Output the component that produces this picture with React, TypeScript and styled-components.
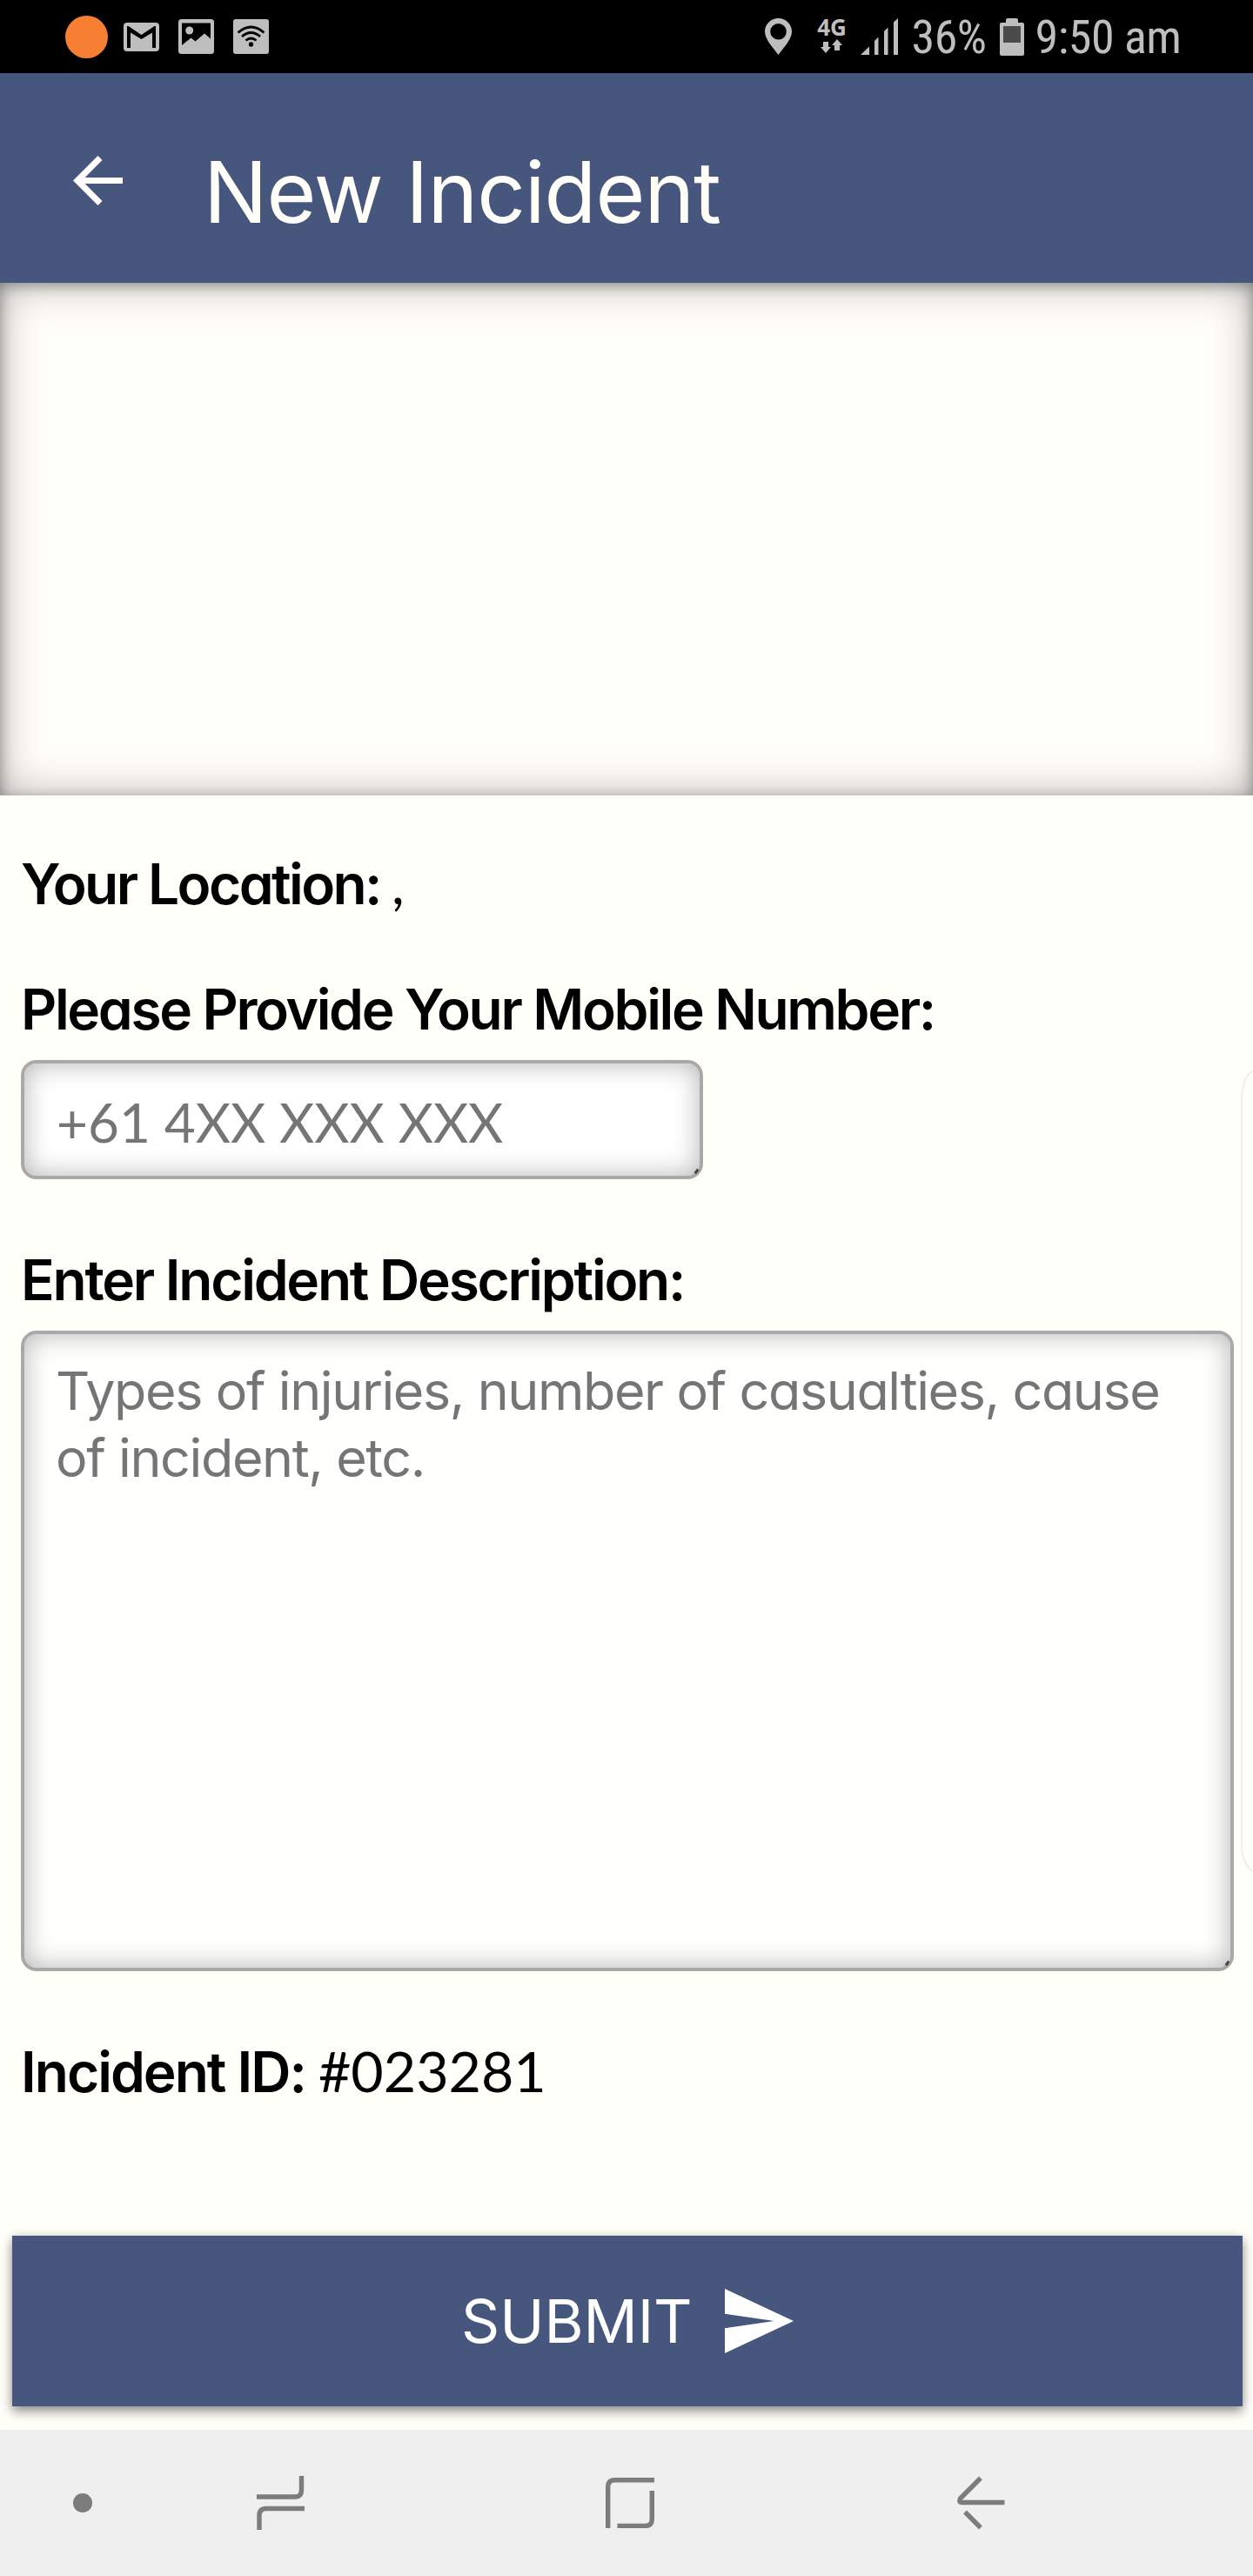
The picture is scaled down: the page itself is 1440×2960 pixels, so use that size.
import React from 'react';
import styled, { createGlobalStyle } from 'styled-components';

const GlobalStyle = createGlobalStyle`
  * { box-sizing: border-box; }
  body { margin: 0; background: #fffef9; }
`;

const uiFont = `Inter, 'Liberation Sans', sans-serif`;
const digitFont = `Lato, 'Liberation Sans', sans-serif`;
const navy = '#47567d';
const statusGrey = '#bebebe';
const navGrey = '#7c7c7c';

const Screen = styled.div`
  position: relative;
  display: flex;
  flex-direction: column;
  width: 1440px;
  height: 2960px;
  overflow: hidden;
  background: #fffef9;
  color: #000;
  font-family: ${uiFont};
  font-feature-settings: 'cv11';
`;

const Glyph = styled.svg`
  display: block;
  flex: none;
`;

/* Status bar */
const StatusBar = styled.div`
  flex: none;
  display: flex;
  justify-content: space-between;
  height: 84px;
  padding: 0 82.5px 0 75px;
  background: #000;
  color: ${statusGrey};
`;

const StatusGroup = styled.div`
  display: flex;
  align-items: center;
`;

const NotificationDot = styled.div`
  width: 49px;
  height: 49px;
  margin-right: 18px;
  border-radius: 50%;
  background: #f77f33;
`;

const NotificationIcons = styled.div`
  display: flex;
  align-items: center;
  gap: 22px;
`;

const Network = styled.div`
  display: flex;
  flex-direction: column;
  align-items: center;
  width: 34px;
  height: 42px;
  margin: 0 16px 0 29px;
`;

const NetworkLabel = styled.span`
  font: 700 26px/20px 'Open Sans', sans-serif;
  height: 24px;
`;

const StatusText = styled.span<{ $gap: number }>`
  font: 400 54px/64px 'Roboto Condensed', Roboto, sans-serif;
  letter-spacing: -0.5px;
  margin-left: ${p => p.$gap}px;
  padding-top: 1px;
  white-space: nowrap;
`;

/* App header */
const Header = styled.header`
  flex: none;
  display: flex;
  align-items: center;
  height: 241px;
  padding-left: 84px;
  background: ${navy};
`;

const BackButton = styled.button`
  margin: 5px 93px 0 0;
  padding: 0;
  border: 0;
  background: none;
`;

const Title = styled.h1`
  margin: 32px 0 0;
  color: #fffef9;
  font-size: 97.7px;
  font-weight: 400;
  line-height: 120px;
  letter-spacing: -1px;
`;

const MapPanel = styled.div`
  flex: none;
  height: 588.5px;
  box-shadow:
    inset 0 0 50px rgba(0, 0, 0, 0.3),
    inset 0 5px 14px rgba(0, 0, 0, 0.22),
    inset 8px 0 20px -8px rgba(0, 0, 0, 0.14),
    inset -8px 0 20px -8px rgba(0, 0, 0, 0.14);
`;

/* Form */
const Form = styled.form`
  flex: 1;
  display: flex;
  flex-direction: column;
  padding: 62.5px 12px 27px 14px;
`;

const Line = styled.div<{ $before?: number; $track: number }>`
  margin-top: ${p => p.$before ?? 0}px;
  padding-left: 10px;
  font-size: 64px;
  font-weight: 600;
  line-height: 80px;
  height: 80px;
  letter-spacing: ${p => p.$track}px;
  white-space: nowrap;
`;

const Value = styled.span<{ $gap: number }>`
  margin-left: ${p => p.$gap}px;
  font-family: ${digitFont};
  font-size: 64.5px;
  font-weight: 400;
  line-height: 1;
  letter-spacing: 0;
`;

const Field = styled.div<{ $w: number; $h: number }>`
  position: relative;
  width: ${p => p.$w}px;
  height: ${p => p.$h}px;
  margin: 18px 0 0 10px;
`;

const fieldStyle = `
  display: block;
  width: 100%;
  height: 100%;
  border: 4px solid #a9a9a9;
  border-radius: 18px;
  outline: none;
  resize: none;
  box-shadow: inset 0 0 30px rgba(0, 0, 0, 0.3);
  color: #000;
  &::placeholder { color: #757575; opacity: 1; }
`;

const PhoneInput = styled.input`
  ${fieldStyle}
  padding: 6px 37px 0;
  background: #fff;
  font: 400 62px/76px ${digitFont};
`;

const DescriptionInput = styled.textarea`
  ${fieldStyle}
  overflow: hidden;
  padding: 27px 36px;
  background: #fffffe;
  font: 400 61px/76.7px ${uiFont};
  font-feature-settings: 'cv11';
  letter-spacing: -1.4px;
`;

const ResizeMark = styled.span`
  position: absolute;
  right: 6px;
  bottom: 6px;
  width: 3px;
  height: 6px;
  background: #444;
  transform: rotate(35deg);
`;

const SubmitButton = styled.button`
  display: flex;
  align-items: center;
  gap: 37px;
  width: 1414px;
  height: 196.5px;
  margin-top: auto;
  padding: 0 0 0 516px;
  border: 0;
  background: ${navy};
  box-shadow: 0 6px 12px rgba(0, 0, 0, 0.42), 0 0 8px rgba(0, 0, 0, 0.1);
  color: #fff;
  font: 400 69px/84px ${uiFont};
  letter-spacing: -0.1px;
`;

const EdgeHandle = styled.div`
  position: absolute;
  top: 1229px;
  right: -20px;
  width: 34px;
  height: 923px;
  border: 2px solid #efeeea;
  border-radius: 18px 0 0 18px / 32px 0 0 32px;
`;

/* System navigation */
const NavBar = styled.nav`
  flex: none;
  display: grid;
  grid-template-columns: 210.8px 401.2px 404px 1fr;
  align-items: center;
  height: 168px;
  padding-left: 84px;
  background: #efefef;
`;

const NavDot = styled.span`
  width: 21.5px;
  height: 21.5px;
  border-radius: 50%;
  background: ${navGrey};
`;

const GmailIcon = () => (
  <Glyph width="41" height="33" viewBox="0 0 41 33">
    <rect width="41" height="33" rx="4" fill={statusGrey} />
    <path d="M4 29V4h1.5l15 10 15-10H37v25h-4V11.5L20.500 19 8 11.500V29z" fill="#000" />
  </Glyph>
);

const PictureIcon = () => (
  <Glyph width="41" height="40" viewBox="0 0 41 40">
    <rect width="41" height="40" rx="3.500" fill={statusGrey} />
    <path d="M4 4.500h33v18L30 16.500l-10.500 9-5-4L4 30z" fill="#000" />
    <circle cx="12.700" cy="13" r="4.500" fill={statusGrey} />
  </Glyph>
);

const WifiIcon = () => (
  <Glyph width="41" height="40" viewBox="0 0 41 40" fill="none" stroke="#000" strokeWidth="2.800">
    <rect width="41" height="40" rx="3" fill={statusGrey} stroke="none" />
    <path d="M5.500 15.500Q20.500 2.500 35.500 15.500M10 20Q20.500 11 31 20M14.500 24.500Q20.500 19.500 26.500 24.500" />
    <circle cx="20.500" cy="29" r="2.700" fill="#000" stroke="none" />
  </Glyph>
);

const PinIcon = () => (
  <Glyph width="31" height="42" viewBox="0 0 31 42">
    <path
      fillRule="evenodd"
      d="M15.500 0C7 0 0 6.700 0 15.200 0 24 8.500 32.500 15.500 42 22.500 32.500 31 24 31 15.200 31 6.700 24 0 15.500 0zm0 6a9.300 9.300 0 1 1 0 18.600 9.300 9.300 0 0 1 0-18.600z"
      fill={statusGrey}
    />
  </Glyph>
);

const DataArrows = () => (
  <Glyph width="26" height="16" viewBox="0 0 26 16" fill={statusGrey}>
    <path d="M3 3h6v6h3L6 16 0 9h3zM16 13V7h-3l6-7 6 7h-3v6z" />
  </Glyph>
);

const SignalIcon = () => (
  <Glyph width="43" height="42" viewBox="0 0 43 42" fill={statusGrey}>
    <path d="M0 42 10 32.500V42zM16 42V26l4.500-4.500V42zM27 42V15l4.500-4.500V42zM38 42V4.500L43 0V42z" />
  </Glyph>
);

const BatteryIcon = styled(Glyph)`
  margin-left: 15px;
`;

export default function App() {
  return (
    <Screen>
      <GlobalStyle />
      <StatusBar>
        <StatusGroup>
          <NotificationDot />
          <NotificationIcons>
            <GmailIcon />
            <PictureIcon />
            <WifiIcon />
          </NotificationIcons>
        </StatusGroup>
        <StatusGroup>
          <PinIcon />
          <Network>
            <NetworkLabel>4G</NetworkLabel>
            <DataArrows />
          </Network>
          <SignalIcon />
          <StatusText $gap={15.5}>36%</StatusText>
          <BatteryIcon width="28" height="43" viewBox="0 0 28 43">
            <path d="M7 5V2q0-2 2-2h10q2 0 2 2v3h5q2 0 2 2v34q0 2-2 2H2q-2 0-2-2V7q0-2 2-2z" fill={statusGrey} />
            <path d="M4 9h20v19H4z" fill="#4b4b4b" />
          </BatteryIcon>
          <StatusText $gap={13}>9:50 am</StatusText>
        </StatusGroup>
      </StatusBar>

      <Header>
        <BackButton type="button" aria-label="Back">
          <Glyph width="57" height="57" viewBox="4 4 16 16">
            <path d="M20 11H7.830l5.590-5.590L12 4l-8 8 8 8 1.410-1.410L7.830 13H20z" fill="#fff" />
          </Glyph>
        </BackButton>
        <Title>New Incident</Title>
      </Header>

      <MapPanel />

      <Form>
        <Line $track={-2.6}>
          Your Location:<Value $gap={13}>,</Value>
        </Line>
        <Line $before={64} $track={-2.35}>Please Provide Your Mobile Number:</Line>
        <Field $w={784} $h={136.5}>
          <PhoneInput placeholder="+61 4XX XXX XXX" />
          <ResizeMark />
        </Field>
        <Line $before={76.5} $track={-2.25}>Enter Incident Description:</Line>
        <Field $w={1393.5} $h={735.5}>
          <DescriptionInput placeholder="Types of injuries, number of casualties, cause of incident, etc." />
          <ResizeMark />
        </Field>
        <Line $before={76} $track={-2}>
          Incident ID:<Value $gap={15}>#023281</Value>
        </Line>
        <SubmitButton type="button">
          SUBMIT
          <Glyph width="79" height="74" viewBox="48 64 416 384" preserveAspectRatio="none">
            <path d="M48 448l416-192L48 64v149.300L346 256 48 298.700z" fill="#fff" />
          </Glyph>
        </SubmitButton>
      </Form>

      <NavBar>
        <NavDot />
        <Glyph width="55" height="62" viewBox="0 0 55 62" fill="none" stroke={navGrey} strokeWidth="5.400">
          <path d="M51.500 0v16q0 8-7 8H0M55 37.500H11q-8 0-8 8V62" />
        </Glyph>
        <Glyph width="56" height="58" viewBox="0 0 56 58" fill="none" stroke={navGrey} strokeWidth="5.400">
          <path d="M2.700 58V10.700q0-8 8-8H56M53.300 15v32.500q0 8-8 8H13.500" />
        </Glyph>
        <Glyph width="55" height="62" viewBox="0 0 55 62" fill="none" stroke={navGrey} strokeWidth="5.400" strokeLinejoin="round">
          <path d="M27 2.500 3.500 26q-2 4.500 2 4.500H54.500M9 41.500 27 59.500" />
        </Glyph>
      </NavBar>
      <EdgeHandle />
    </Screen>
  );
}
